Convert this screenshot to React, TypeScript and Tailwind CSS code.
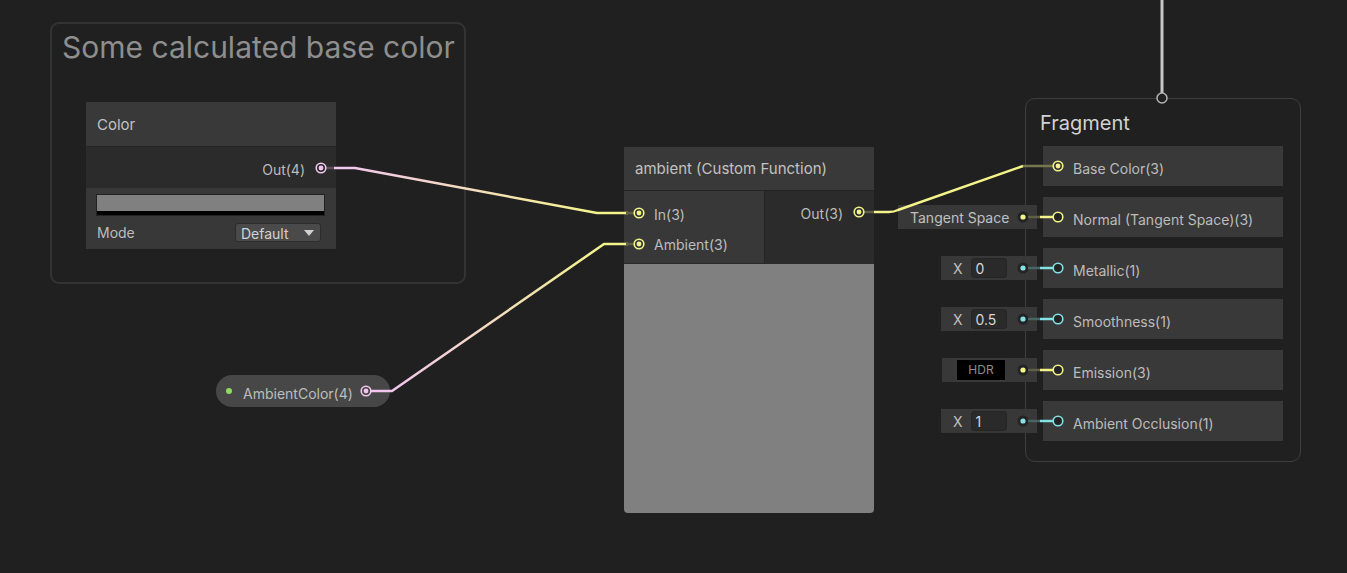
import React from "react";

const PINK = "#f2c6ee";
const YEL = "#f4f48a";
const CYAN = "#84e2e6";

function Port({ x, y, c, filled = true, fill = "#2a2a2a" }: { x: number; y: number; c: string; filled?: boolean; fill?: string }) {
  return (
    <g>
      <circle cx={x} cy={y} r={4.8} fill={fill} stroke={c} strokeWidth={1.6} />
      {filled && <circle cx={x} cy={y} r={2.4} fill={c} />}
    </g>
  );
}

function InlineLink({ y, c, dim }: { y: number; c: string; dim: string }) {
  return (
    <g>
      <circle cx={1023} cy={y} r={5.5} fill="#232323" />
      <circle cx={1023} cy={y} r={2.6} fill={c} />
      <line x1={1028} y1={y} x2={1040} y2={y} stroke={dim} strokeWidth={2.5} />
      <line x1={1040} y1={y} x2={1053} y2={y} stroke={c} strokeWidth={2.5} />
      <Port x={1058} y={y} c={c} filled={false} fill="#232323" />
    </g>
  );
}

function XField({ top, value }: { top: string; value: string }) {
  return (
    <div className={`absolute left-[941px] ${top} flex h-[24px] w-[96px] items-center bg-[#383838] pl-[12px] text-[14px] text-[#c0c0c0]`}>
      <span>X</span>
      <div className="ml-[8px] flex h-[20px] w-[36px] items-center rounded-[3px] border border-[#252525] bg-[#2a2a2a] pl-[4px] text-[#d6d6d6]">
        {value}
      </div>
    </div>
  );
}

export default function App() {
  const rows = [
    "Base Color(3)",
    "Normal (Tangent Space)(3)",
    "Metallic(1)",
    "Smoothness(1)",
    "Emission(3)",
    "Ambient Occlusion(1)",
  ];
  return (
    <div className="relative h-[573px] w-[1347px] overflow-hidden bg-[#202020] font-['Inter',sans-serif]">
      {/* Group */}
      <div className="absolute left-[50px] top-[22px] h-[262px] w-[416px] rounded-[9px] border-2 border-[#333333]">
        <div className="pl-[10px] pt-[3px] text-[30px] leading-[40px] text-[#8e8e8e]">Some calculated base color</div>
      </div>

      {/* Color node */}
      <div className="absolute left-[86px] top-[102px] flex w-[250px] flex-col">
        <div className="flex h-[45px] items-center border-b border-[#232323] bg-[#393939] pl-[11px] pt-[3px] text-[15px] text-[#c2c2c2]">Color</div>
        <div className="flex h-[41px] items-center justify-end bg-[#2b2b2b] pr-[31px] pt-[4px] text-[14px] text-[#bcbcbc]">Out(4)</div>
        <div className="flex h-[61px] flex-col bg-[#383838] pl-[10px] pr-[11px] pt-[6px]">
          <div className="flex h-[22px] w-full flex-col border border-[#222222]">
            <div className="flex-1 bg-[#808080]" />
            <div className="h-[4px] bg-black" />
          </div>
          <div className="mt-[7px] flex h-[19px] items-center justify-between text-[14px] text-[#bcbcbc]">
            <span className="pl-[1px]">Mode</span>
            <div className="mr-[4px] flex h-[19px] w-[86px] items-center justify-between rounded-[3px] border border-[#2c2c2c] bg-[#4a4a4a] pl-[5px] pr-[6px] text-[#d2d2d2]">
              <span className="pt-[2px]">Default</span>
              <svg width="10" height="6" viewBox="0 0 10 6"><path d="M0 0 L10 0 L5 6 Z" fill="#d0d0d0" /></svg>
            </div>
          </div>
        </div>
      </div>

      {/* Custom function node */}
      <div className="absolute left-[624px] top-[147px] flex w-[250px] flex-col">
        <div className="flex h-[44px] items-center border-b border-[#232323] bg-[#393939] pl-[11px] pt-[2px] text-[15px] text-[#c2c2c2]">ambient (Custom Function)</div>
        <div className="flex h-[72px]">
          <div className="flex w-[140px] flex-col bg-[#383838] pt-[6px] text-[14px] text-[#bcbcbc]">
            <div className="flex h-[30px] items-center pl-[30px] pt-[4px]">In(3)</div>
            <div className="flex h-[30px] items-center pl-[30px] pt-[4px]">Ambient(3)</div>
          </div>
          <div className="flex flex-1 flex-col border-l border-[#232323] bg-[#2b2b2b] pt-[5px] text-[14px] text-[#bcbcbc]">
            <div className="flex h-[30px] items-center justify-end pr-[31px] pt-[4px]">Out(3)</div>
          </div>
        </div>
        <div className="h-[250px] rounded-b-[4px] border-t border-[#2a2a2a] bg-[#808080]" />
      </div>

      {/* AmbientColor property pill */}
      <div className="absolute left-[216px] top-[375px] flex h-[32px] w-[174px] items-center rounded-full bg-[#474747] pl-[10px] text-[14px] text-[#bdbdbd]">
        <div className="h-[6px] w-[6px] rounded-full bg-[#8fdc5c]" />
        <span className="ml-[11px] pt-[4px]">AmbientColor(4)</span>
      </div>

      {/* Fragment context */}
      <div className="absolute left-[1025px] top-[98px] flex h-[364px] w-[276px] flex-col rounded-[10px] border border-[#3e3e3e]">
        <div className="mb-[11px] pl-[14px] pt-[13px] text-[20px] leading-[23px] text-[#d2d2d2]">Fragment</div>
        <div className="ml-[17px] flex w-[240px] flex-col gap-[11px]">
          {rows.map((r) => (
            <div key={r} className="flex h-[40px] items-center bg-[#393939] pl-[30px] pt-[4px] text-[14px] text-[#bcbcbc]">{r}</div>
          ))}
        </div>
      </div>

      {/* Inline value fields */}
      <div className="absolute left-[898px] top-[205px] flex h-[24px] w-[139px] items-center bg-[#383838] pl-[12px] text-[14px] text-[#c0c0c0]">Tangent Space</div>
      <XField top="top-[256px]" value="0" />
      <XField top="top-[307px]" value="0.5" />
      <div className="absolute left-[942px] top-[358px] flex h-[24px] w-[95px] items-center bg-[#383838] pl-[14px]">
        <div className="flex h-[22px] w-[50px] items-center justify-center border border-[#3a3a3a] bg-black text-[12px] text-[#8c8c8c]">HDR</div>
      </div>
      <XField top="top-[409px]" value="1" />

      {/* Wires and ports */}
      <svg className="pointer-events-none absolute left-0 top-0" width="1347" height="573" viewBox="0 0 1347 573">
        <defs>
          <linearGradient id="g1" gradientUnits="userSpaceOnUse" x1="345" y1="0" x2="600" y2="0">
            <stop offset="0" stopColor={PINK} />
            <stop offset="1" stopColor={YEL} />
          </linearGradient>
          <linearGradient id="g2" gradientUnits="userSpaceOnUse" x1="392" y1="0" x2="605" y2="0">
            <stop offset="0" stopColor={PINK} />
            <stop offset="1" stopColor={YEL} />
          </linearGradient>
        </defs>

        {/* top master stack wire */}
        <line x1={1162} y1={0} x2={1162} y2={93} stroke="#c6c6c6" strokeWidth={3} />
        <circle cx={1162} cy={98} r={5} fill="#202020" stroke="#b4b4b4" strokeWidth={1.5} />

        {/* Out(4) -> In(3) */}
        <line x1={326} y1={168} x2={334} y2={168} stroke="#5e4e5c" strokeWidth={2.5} />
        <path d="M334 168 L355 168 L597 213 L628 213" fill="none" stroke="url(#g1)" strokeWidth={2.5} strokeLinejoin="round" />
        <line x1={626} y1={213} x2={634} y2={213} stroke="#5f5f45" strokeWidth={2.5} />
        <Port x={321} y={168} c={PINK} fill="#2b2b2b" />
        <Port x={639} y={213} c={YEL} fill="#383838" />

        {/* AmbientColor -> Ambient(3) */}
        <path d="M371 391 L392 391 L604 244 L628 244" fill="none" stroke="url(#g2)" strokeWidth={2.5} strokeLinejoin="round" />
        <line x1={626} y1={244} x2={634} y2={244} stroke="#5f5f45" strokeWidth={2.5} />
        <Port x={366} y={391} c={PINK} fill="#474747" />
        <Port x={639} y={244} c={YEL} fill="#383838" />

        {/* Out(3) -> Base Color */}
        <line x1={864} y1={212} x2={874} y2={212} stroke="#5f5f45" strokeWidth={2.5} />
        <path d="M874 212 L889 212 Q894 212 898 210 L1023 166" fill="none" stroke={YEL} strokeWidth={2.5} strokeLinejoin="round" />
        <line x1={1023} y1={166} x2={1053} y2={166} stroke="#77774f" strokeWidth={2.5} />
        <Port x={859} y={212} c={YEL} fill="#2b2b2b" />
        <Port x={1058} y={166} c={YEL} fill="#393939" />

        {/* inline links */}
        <InlineLink y={217} c={YEL} dim="#5f5f45" />
        <InlineLink y={268} c={CYAN} dim="#4a6364" />
        <InlineLink y={319} c={CYAN} dim="#4a6364" />
        <InlineLink y={370} c={YEL} dim="#5f5f45" />
        <InlineLink y={421} c={CYAN} dim="#4a6364" />
      </svg>
    </div>
  );
}
